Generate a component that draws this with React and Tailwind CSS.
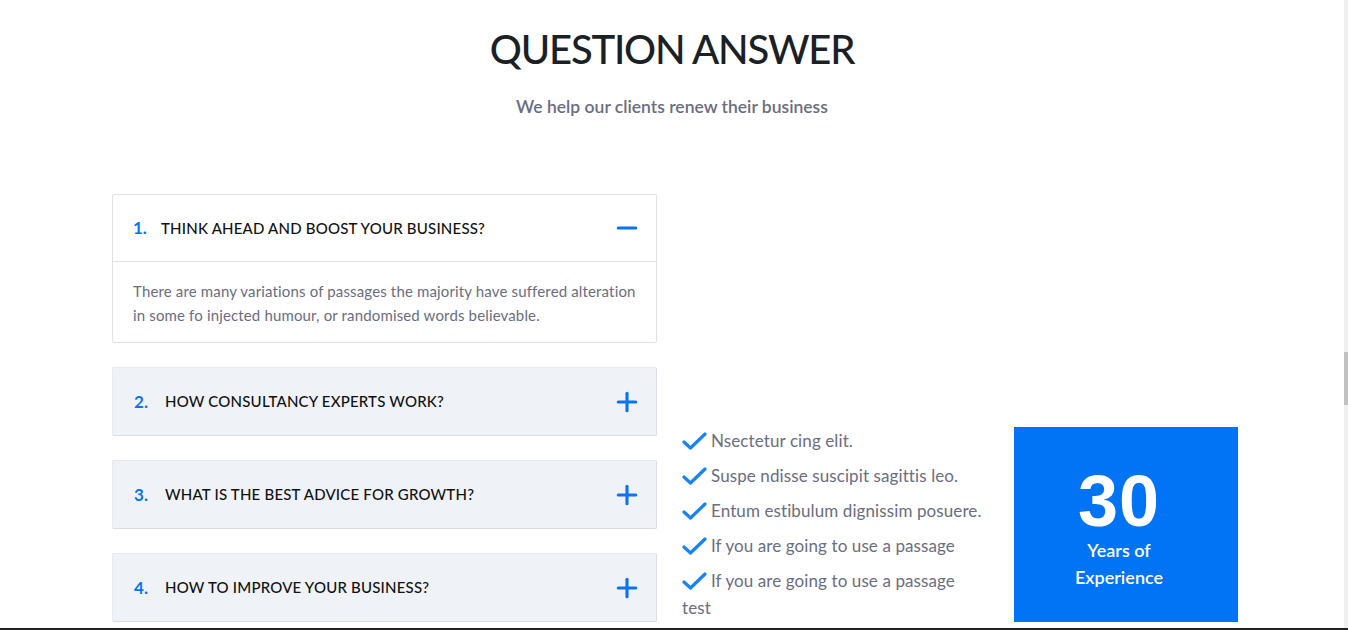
import { Minus, Plus } from 'lucide-react';

const faqs = [
  {
    id: 1,
    q: 'THINK AHEAD AND BOOST YOUR BUSINESS?',
    a: 'There are many variations of passages the majority have suffered alteration in some fo injected humour, or randomised words believable.',
    open: true,
  },
  { id: 2, q: 'HOW CONSULTANCY EXPERTS WORK?' },
  { id: 3, q: 'WHAT IS THE BEST ADVICE FOR GROWTH?' },
  { id: 4, q: 'HOW TO IMPROVE YOUR BUSINESS?' },
];

const points = [
  'Nsectetur cing elit.',
  'Suspe ndisse suscipit sagittis leo.',
  'Entum estibulum dignissim posuere.',
  'If you are going to use a passage',
  'If you are going to use a passage test',
];

function Check() {
  return (
    <svg width="25" height="18" viewBox="0 0 25 18" className="inline-block align-[-3px] mr-[4px]">
      <path d="M2 10 L8.5 16 L23 2" fill="none" stroke="#1784f0" strokeWidth="3.2" strokeLinecap="round" strokeLinejoin="round" />
    </svg>
  );
}

function FaqItem({ item }) {
  if (item.open) {
    return (
      <div className="bg-white border border-[#e2e2e2] rounded-[2px]">
        <div className="h-[67px] flex items-center pl-[20px] pr-[14px] border-b border-[#e2e2e2]">
          <span className="text-[17px] font-bold text-[#0a74f0] w-[28px]">1.</span>
          <span className="text-[15px] font-medium text-[#111] tracking-[0.2px]">{item.q}</span>
          <Minus className="ml-auto w-[30px] h-[30px] text-[#0a74f0]" strokeWidth={2.5} />
        </div>
        <p className="px-[20px] pt-[17px] pb-[15px] text-[15px] leading-[24px] text-[#6b6d80] tracking-[0.15px]">{item.a}</p>
      </div>
    );
  }
  return (
    <div className="bg-[#eff3f8] border border-[#e6e9ee] border-r-[#d9dde3] border-b-[#d9dde3] rounded-[2px] h-[69px] flex items-center pl-[21px] pr-[14px]">
      <span className="text-[17px] font-bold text-[#0a74f0] w-[31px]">{item.id}.</span>
      <span className="text-[15px] font-medium text-[#111] tracking-[0.2px]">{item.q}</span>
      <Plus className="ml-auto w-[30px] h-[30px] text-[#0a74f0]" strokeWidth={2.5} />
    </div>
  );
}

export default function App() {
  return (
    <div className="h-[630px] overflow-hidden bg-white flex border-b-2 border-[#222]" style={{ fontFamily: 'Lato, "Open Sans", sans-serif' }}>
      <div className="flex-1 flex flex-col">
        {/* Section heading */}
        <div className="pt-[24px] text-center">
          <h2 className="text-[40px] leading-[50px] font-medium text-[#1b1f26] tracking-[-1.2px]">QUESTION ANSWER</h2>
          <p className="mt-[21px] text-[17.5px] leading-[24px] font-semibold text-[#6b6d80]">We help our clients renew their business</p>
        </div>

        <div className="flex gap-[25px] pl-[112px] mt-[75px]">
          {/* Accordion */}
          <div className="w-[545px] flex flex-col gap-[24px]">
            {faqs.map((item) => (
              <FaqItem key={item.id} item={item} />
            ))}
          </div>

          {/* Right side */}
          <div className="w-[556px] flex flex-col">
            <div className="h-[233px]" />
            <div className="flex items-start">
              <ul className="w-[303px] text-[17px] leading-[27px] text-[#6b6d80] tracking-[0.1px]">
                {points.map((p, i) => (
                  <li key={i} className="mb-[8px]">
                    <Check />
                    {p}
                  </li>
                ))}
              </ul>
              <div className="ml-auto w-[224px] h-[195px] bg-[#0174f6] flex flex-col items-center justify-center text-white pt-[6px] pr-[14px]">
                <span className="text-[72px] leading-[72px] font-bold tracking-[1px]" style={{ fontFamily: '"Liberation Sans", Arial, sans-serif' }}>30</span>
                <span className="text-[18px] leading-[27px] font-semibold">Years of</span>
                <span className="text-[18px] leading-[27px] font-semibold">Experience</span>
              </div>
            </div>
          </div>
        </div>
      </div>

      {/* page scrollbar */}
      <div className="w-[4px] bg-[#f0f0f0] flex flex-col">
        <div className="h-[352px]" />
        <div className="h-[53px] bg-[#c1c1c1]" />
      </div>
    </div>
  );
}
